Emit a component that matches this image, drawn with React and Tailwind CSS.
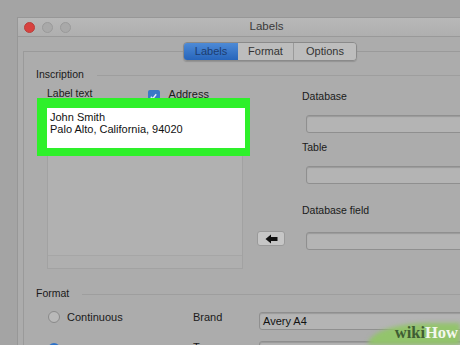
import React from "react";

const font = { fontFamily: '"Liberation Sans", Arial, sans-serif' };

const Field = ({ children, className = "" }) => (
  <div
    className={`h-[18px] rounded-[3px] border border-[#8f8f8f] bg-[#b4b4b4] shadow-[inset_0_1px_1px_rgba(0,0,0,0.15)] flex items-center px-[3px] text-[11px] text-[#111] ${className}`}
  >
    {children}
  </div>
);

const App = () => {
  return (
    <div className="w-[460px] h-[345px] overflow-hidden bg-[#a4a4a4] relative text-[#1a1a1a]" style={font}>
      <div className="ml-[17px] mt-[17px] w-[498px] h-[340px] bg-[#acacac] border-l border-t border-[#979797]">
        {/* title bar */}
        <div className="h-[19px] bg-gradient-to-b from-[#b8b8b8] to-[#afafaf] border-b border-[#999] flex items-center relative">
          <div className="flex items-center gap-[7px] pl-[6px]">
            <span className="w-[11px] h-[11px] rounded-full bg-[#d8423f] border border-[#b8403c]" />
            <span className="w-[11px] h-[11px] rounded-full bg-[#a9a9a9] border border-[#9a9a9a]" />
            <span className="w-[11px] h-[11px] rounded-full bg-[#a9a9a9] border border-[#9a9a9a]" />
          </div>
          <div className="absolute inset-0 flex items-center justify-center text-[11.5px] text-[#3a3a3a]">Labels</div>
        </div>

        {/* body */}
        <div className="pt-[5px]">
          <div className="relative z-10 flex pl-[165px]">
            <div className="flex h-[19px] rounded-[4px] border border-[#8a8a8a] overflow-hidden text-[11px] shadow-[0_1px_1px_rgba(0,0,0,0.15)]">
              <div className="w-[54px] flex items-center justify-center bg-gradient-to-b from-[#4d8ad6] to-[#2765bb] text-[#1d3d70]">Labels</div>
              <div className="w-[56px] flex items-center justify-center bg-[#bdbdbd] border-r border-[#9a9a9a] text-[#333]">Format</div>
              <div className="w-[62px] flex items-center justify-center bg-[#bdbdbd] text-[#333]">Options</div>
            </div>
          </div>

          <div className="-mt-[10px] ml-[5px] border-l border-t border-[#9a9a9a] h-[300px] pl-[12px] pt-[16px] text-[10.5px]">
            {/* Inscription */}
            <div className="flex items-center h-[13px]">
              <span>Inscription</span>
              <div className="flex-1 h-px bg-[#9e9e9e] ml-[13px] mt-[1px]" />
            </div>

            <div className="flex mt-[6px]">
              {/* left column */}
              <div className="ml-[11px] w-[196px] relative">
                <div className="flex items-center h-[13px]">
                  <span>Label text</span>
                  <span className="ml-[55px] mt-[5px] w-[12px] h-[12px] rounded-[2px] bg-[#3b78c6] flex items-center justify-center">
                    <svg width="9" height="9" viewBox="0 0 10 10">
                      <path d="M2 5.2 L4.2 7.5 L8 2.5" stroke="#e8eef8" strokeWidth="1.6" fill="none" />
                    </svg>
                  </span>
                  <span className="ml-[9px] mt-[2px] text-[11px]">Address</span>
                </div>
                <div className="mt-[7px] h-[162px] border border-[#a2a2a2] bg-[#b1b1b1] flex flex-col">
                  <div className="flex-1" />
                  <div className="h-[13px] border-t border-[#a6a6a6] bg-[#afafaf]" />
                </div>
                {/* highlight annotation */}
                <div className="absolute left-[-10px] top-[11px] w-[213px] h-[58px] bg-[#2ef02a] pl-[10px] pt-[10px] pr-[5px] pb-[8px]">
                  <div className="w-full h-full bg-white pl-[3px] pt-[3px] text-[11px] leading-[12px] text-[#111]">
                    <div>John Smith</div>
                    <div>Palo Alto, California, 94020</div>
                  </div>
                </div>
              </div>

              {/* middle column */}
              <div className="w-[59px] pl-[14px] pt-[144px]">
                <div className="w-[28px] h-[15px] rounded-[3px] bg-[#c6c6c6] border border-[#9a9a9a] flex items-center justify-center">
                  <svg width="13" height="10" viewBox="0 0 13 10">
                    <path d="M0.5 5 L6 0.5 V3 H12.5 V7 H6 V9.5 Z" fill="#111" />
                  </svg>
                </div>
              </div>

              {/* right column */}
              <div className="flex-1 pt-[3px]">
                <div className="h-[13px] leading-[13px]">Database</div>
                <Field className="mt-[12px] ml-[4px]" />
                <div className="mt-[8px] h-[13px] leading-[13px]">Table</div>
                <Field className="mt-[12px] ml-[4px] h-[17px]" />
                <div className="mt-[20px] h-[13px] leading-[13px]">Database field</div>
                <Field className="mt-[15px] ml-[4px] h-[17px]" />
              </div>
            </div>

            {/* Format */}
            <div className="flex items-center h-[13px] mt-[18px]">
              <span>Format</span>
              <div className="flex-1 h-px bg-[#9e9e9e] ml-[13px] mt-[2px]" />
            </div>
            <div className="grid grid-cols-[145px_66px_1fr] ml-[12px] mt-[12px] gap-y-[11px] text-[11px]">
              <div className="flex items-center h-[16px] -mt-[3px]">
                <span className="w-[12px] h-[12px] rounded-full border border-[#8a8a8a] bg-[#b9b9b9]" />
                <span className="ml-[7px]">Continuous</span>
              </div>
              <div className="h-[16px] leading-[12px] -mt-[1px]">Brand</div>
              <Field className="h-[17px]">Avery A4</Field>
              <div className="flex items-center h-[16px]">
                <span className="w-[12px] h-[12px] rounded-full bg-[#2f72c8]" />
                <span className="ml-[7px]">Sheet</span>
              </div>
              <div className="h-[16px] leading-[12px]">Type</div>
              <Field className="h-[17px]">[blank]</Field>
            </div>
          </div>
        </div>
      </div>

      {/* wikiHow watermark */}
      <div className="absolute right-0 bottom-0 w-[92px] h-[22px] rounded-tl-[60px_22px] bg-[#93c46c] blur-[2px]" />
      <div className="absolute right-[2px] bottom-[4px] text-[16.5px] font-bold leading-none" style={{ fontFamily: '"Liberation Serif", serif' }}>
        <span className="text-[#3f5d33]">wiki</span>
        <span className="text-[#f3f7ee]">How</span>
      </div>
    </div>
  );
};

export default App;
